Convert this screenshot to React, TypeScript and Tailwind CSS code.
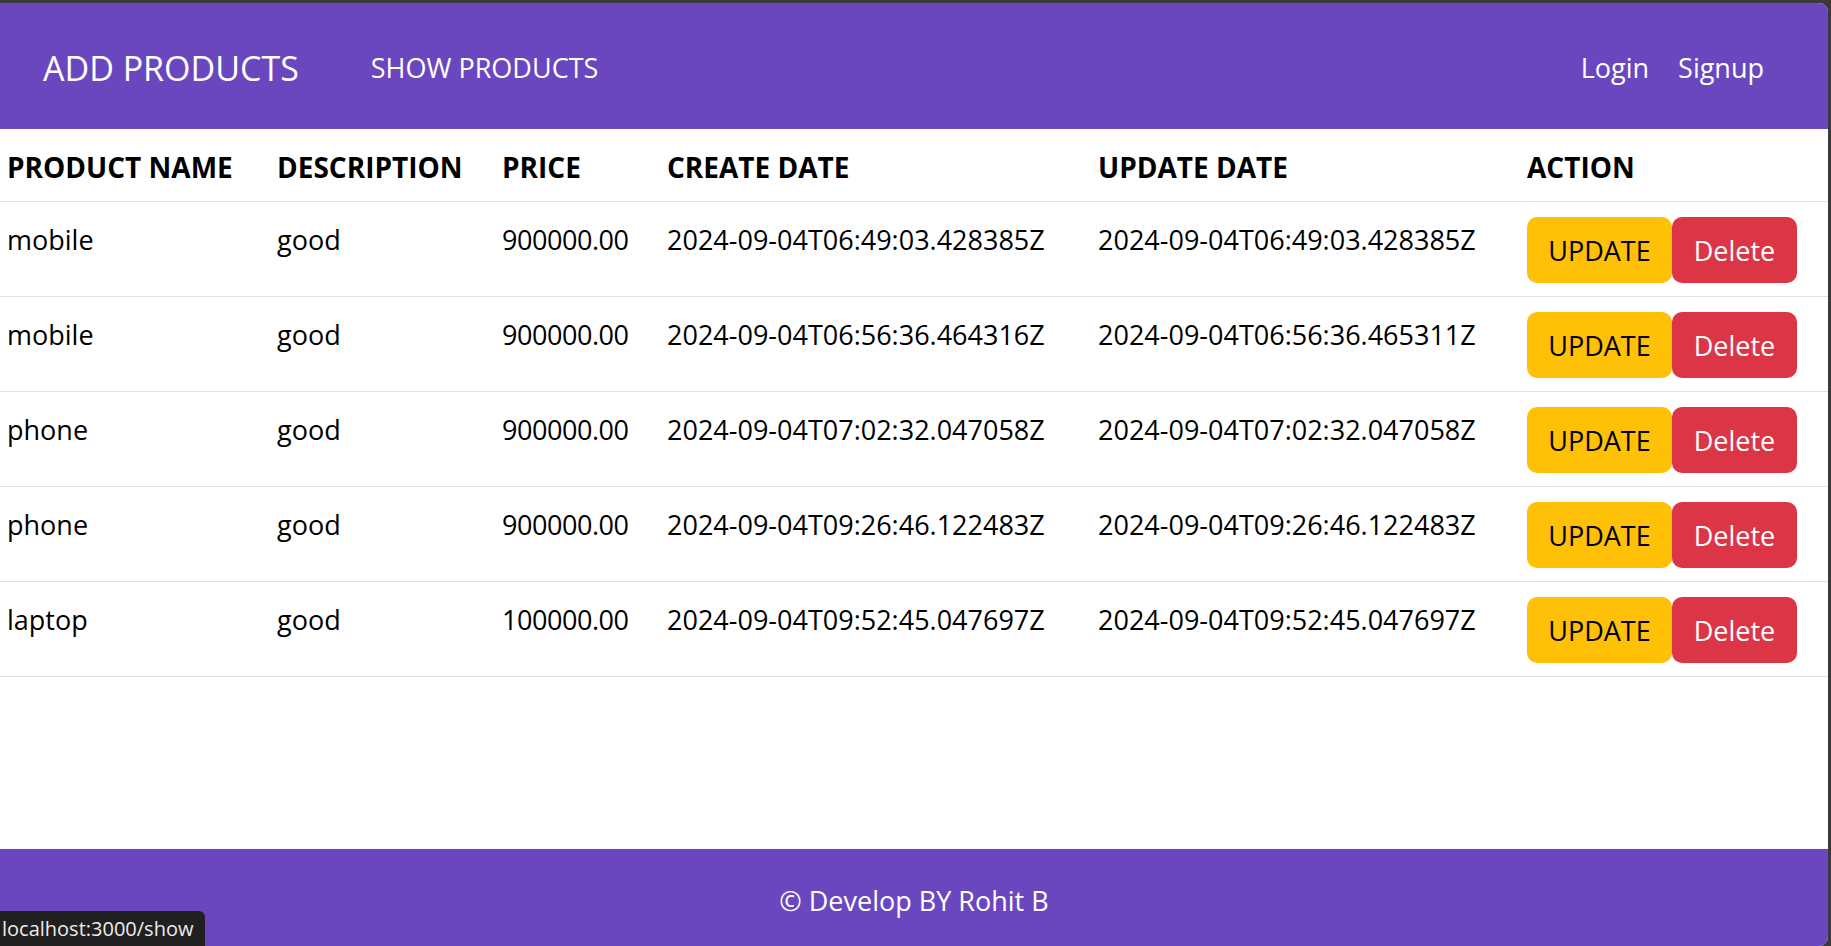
import React from "react";

const rows = [
  ["mobile", "good", "900000.00", "2024-09-04T06:49:03.428385Z", "2024-09-04T06:49:03.428385Z"],
  ["mobile", "good", "900000.00", "2024-09-04T06:56:36.464316Z", "2024-09-04T06:56:36.465311Z"],
  ["phone", "good", "900000.00", "2024-09-04T07:02:32.047058Z", "2024-09-04T07:02:32.047058Z"],
  ["phone", "good", "900000.00", "2024-09-04T09:26:46.122483Z", "2024-09-04T09:26:46.122483Z"],
  ["laptop", "good", "100000.00", "2024-09-04T09:52:45.047697Z", "2024-09-04T09:52:45.047697Z"],
];

const headers = ["PRODUCT NAME", "DESCRIPTION", "PRICE", "CREATE DATE", "UPDATE DATE", "ACTION"];

export default function App() {
  return (
    <div
      className="w-[1831px] h-[946px] bg-[#3a3a3a] pt-[3px] pr-[3px] overflow-hidden relative"
      style={{ fontFamily: '"Open Sans", "Noto Sans", sans-serif' }}
    >
      <div className="w-[1828px] h-[943px] bg-white rounded-tr-[9px] rounded-br-[9px] overflow-hidden flex flex-col">
        <nav className="h-[126px] shrink-0 bg-[#6a47bf] flex items-center pt-[3px] pl-[43px] pr-[64px] text-white">
          <span className="text-[34px] leading-none">ADD PRODUCTS</span>
          <span className="ml-[72px] text-[27px] leading-none">SHOW PRODUCTS</span>
          <div className="ml-auto flex items-center gap-[29px] text-[27px] leading-none">
            <span>Login</span>
            <span>Signup</span>
          </div>
        </nav>

        <div className="flex-1">
          <table className="w-full table-fixed border-collapse text-[27px] text-black">
            <colgroup>
              <col className="w-[270px]" />
              <col className="w-[225px]" />
              <col className="w-[165px]" />
              <col className="w-[431px]" />
              <col className="w-[429px]" />
              <col />
            </colgroup>
            <thead>
              <tr className="border-b border-[#dee2e6]">
                {headers.map((h, i) => (
                  <th
                    key={i}
                    className="text-left font-bold text-[28px] pl-[7px] pt-[5px] h-[72px] align-middle whitespace-nowrap"
                  >
                    {h}
                  </th>
                ))}
              </tr>
            </thead>
            <tbody>
              {rows.map((r, i) => (
                <tr key={i} className="border-b border-[#dee2e6]">
                  {r.map((c, j) => (
                    <td
                      key={j}
                      className={
                        "pl-[7px] pt-[17px] pb-[11px] align-top leading-[42px] h-[94px] whitespace-nowrap " +
                        (j === 2 ? "tracking-[-0.45px]" : "")
                      }
                    >
                      {c}
                    </td>
                  ))}
                  <td className="pl-[7px] pt-[15px] pb-[13px] align-top">
                    <div className="flex">
                      <button className="w-[145px] h-[66px] pt-[3px] bg-[#ffc107] text-black rounded-[10px] text-[27px]">
                        UPDATE
                      </button>
                      <button className="w-[125px] h-[66px] pt-[3px] bg-[#dc3545] text-white rounded-[10px] text-[27px]">
                        Delete
                      </button>
                    </div>
                  </td>
                </tr>
              ))}
            </tbody>
          </table>
        </div>

        <footer className="h-[97px] shrink-0 bg-[#6a47bf] flex items-center justify-center pt-[8px] text-white text-[27px]">
          © Develop BY Rohit B
        </footer>
      </div>

      <div className="absolute left-0 bottom-0 h-[35px] w-[205px] bg-[#202020] rounded-tr-[6px] flex items-center pl-[2px] text-[#ececec] text-[20px] leading-none">
        localhost:3000/show
      </div>
    </div>
  );
}
